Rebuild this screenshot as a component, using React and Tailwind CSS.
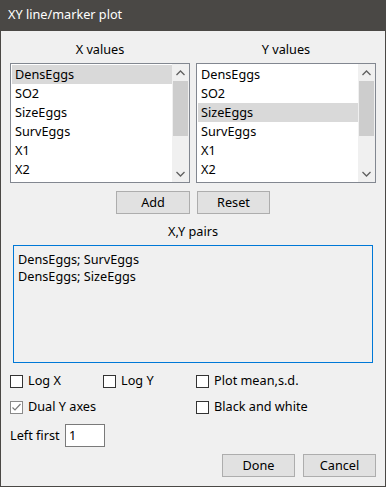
import React from 'react'

const items = ['DensEggs', 'SO2', 'SizeEggs', 'SurvEggs', 'X1', 'X2']

function Chevron({ down }) {
  return (
    <svg width="9" height="6" viewBox="0 0 9 6" className="block">
      <path
        d={down ? 'M0.5 1 L4.5 5 L8.5 1' : 'M0.5 5 L4.5 1 L8.5 5'}
        fill="none"
        stroke="#606060"
        strokeWidth="1.3"
      />
    </svg>
  )
}

function ListBox({ selected }) {
  return (
    <div className="w-[180px] h-[120px] border border-[#828790] bg-white flex">
      <div className="flex-1 pt-[1px] pl-[1px]">
        {items.map((it) => (
          <div
            key={it}
            className={`h-[19px] leading-[19px] pl-[3px] ${it === selected ? 'bg-[#d9d9d9]' : ''}`}
          >
            {it}
          </div>
        ))}
      </div>
      <div className="w-[17px] bg-[#f0f0f0] flex flex-col">
        <div className="h-[17px] flex items-center justify-center">
          <Chevron />
        </div>
        <div className="h-[55px] mx-[1px] bg-[#cdcdcd]" />
        <div className="flex-1" />
        <div className="h-[17px] flex items-center justify-center">
          <Chevron down />
        </div>
      </div>
    </div>
  )
}

function Button({ children, w = 'w-[73px]' }) {
  return (
    <div className={`${w} h-[23px] border border-[#adadad] bg-[#e1e1e1] flex items-center justify-center`}>
      {children}
    </div>
  )
}

function Check({ checked, label }) {
  return (
    <div className="flex items-center h-[16px]">
      <div
        className={`w-[13px] h-[13px] border bg-white flex items-center justify-center ${checked ? 'border-[#8a8a8a]' : 'border-[#333333]'}`}
      >
        {checked && (
          <svg width="11" height="11" viewBox="0 0 11 11">
            <path d="M1.5 5.5 L4 8 L9.5 2" fill="none" stroke="#7a7a7a" strokeWidth="1.2" />
          </svg>
        )}
      </div>
      <span className="ml-[5px]">{label}</span>
    </div>
  )
}

export default function App() {
  return (
    <div
      className="w-[386px] h-[487px] bg-[#f0f0f0] border-x border-b border-[#4a4845] flex flex-col text-[12.7px] text-black"
      style={{ fontFamily: '"Noto Sans", "Open Sans", sans-serif' }}
    >
      {/* Title bar */}
      <div className="h-[31px] -mx-[1px] bg-[#4a4845] text-white flex items-center pl-[8px] pb-[1px]">
        XY line/marker plot
      </div>

      <div className="flex-1 px-[9px] pt-[10px]">
        {/* Lists */}
        <div className="flex gap-[6px]">
          <div className="flex flex-col items-center">
            <div className="h-[16px] leading-[16px]">X values</div>
            <div className="mt-[6px]">
              <ListBox selected="DensEggs" />
            </div>
          </div>
          <div className="flex flex-col items-center">
            <div className="h-[16px] leading-[16px]">Y values</div>
            <div className="mt-[6px]">
              <ListBox selected="SizeEggs" />
            </div>
          </div>
        </div>

        {/* Add / Reset */}
        <div className="flex justify-center gap-[7px] mt-[8px]">
          <Button w="w-[74px]">Add</Button>
          <Button>Reset</Button>
        </div>

        {/* Pairs */}
        <div className="h-[16px] leading-[16px] text-center mt-[9px]">X,Y pairs</div>
        <div className="ml-[3px] mt-[6px] w-[360px] h-[118px] border border-[#0078d7] pt-[5px] pl-[4px] leading-[17px]">
          <div>DensEggs; SurvEggs</div>
          <div>DensEggs; SizeEggs</div>
        </div>

        {/* Options */}
        <div className="mt-[10px] grid grid-cols-[93px_93px_1fr] gap-y-[10px]">
          <Check label="Log X" />
          <Check label="Log Y" />
          <Check label="Plot mean,s.d." />
          <div className="col-span-2">
            <Check checked label="Dual Y axes" />
          </div>
          <Check label="Black and white" />
        </div>

        {/* Left first */}
        <div className="flex items-center mt-[9px]">
          <span className="w-[55px]">Left first</span>
          <div className="w-[40px] h-[23px] border border-[#7a7a7a] bg-white pl-[3px] leading-[21px]">1</div>
        </div>

        {/* Done / Cancel */}
        <div className="flex justify-end gap-[8px] mt-[7px]">
          <Button>Done</Button>
          <Button>Cancel</Button>
        </div>
      </div>
    </div>
  )
}
